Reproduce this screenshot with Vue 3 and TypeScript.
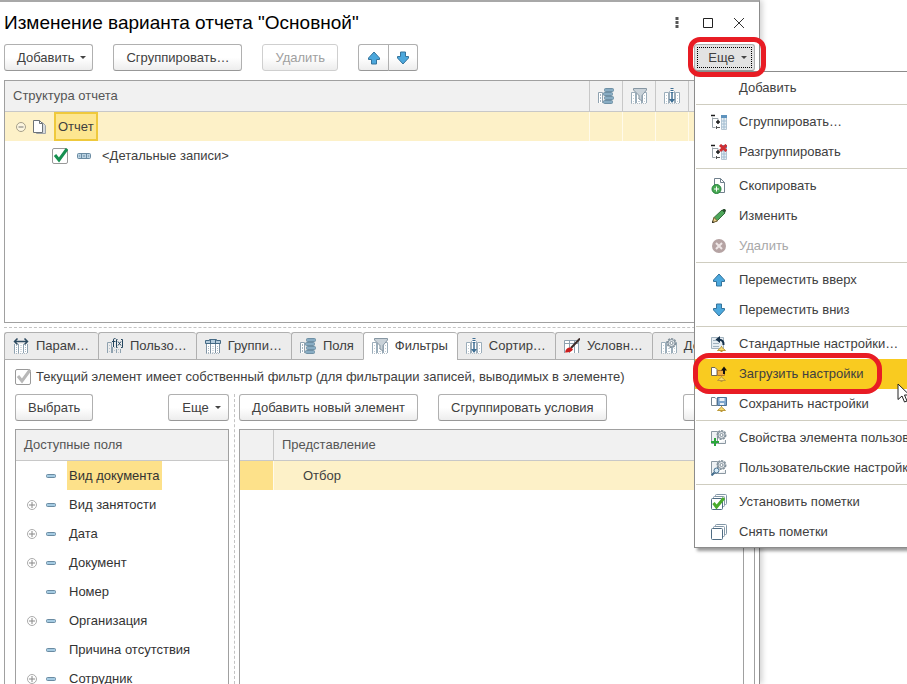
<script setup lang="ts">
import { ref } from 'vue'

interface MenuItem {
  label: string
  icon?: string
  disabled?: boolean
  active?: boolean
}

interface Field {
  name: string
  expandable: boolean
}

const menuGroups: MenuItem[][] = [
  [{ label: 'Добавить' }],
  [
    { label: 'Сгруппировать…', icon: 'group' },
    { label: 'Разгруппировать', icon: 'ungroup' },
  ],
  [
    { label: 'Скопировать', icon: 'copy' },
    { label: 'Изменить', icon: 'pencil' },
    { label: 'Удалить', icon: 'remove', disabled: true },
  ],
  [
    { label: 'Переместить вверх', icon: 'up' },
    { label: 'Переместить вниз', icon: 'down' },
  ],
  [
    { label: 'Стандартные настройки…', icon: 'standard' },
    { label: 'Загрузить настройки', icon: 'load', active: true },
    { label: 'Сохранить настройки', icon: 'save' },
  ],
  [
    { label: 'Свойства элемента пользовательских настроек', icon: 'props' },
    { label: 'Пользовательские настройки', icon: 'user' },
  ],
  [
    { label: 'Установить пометки', icon: 'check-all' },
    { label: 'Снять пометки', icon: 'uncheck-all' },
  ],
]

const tabs = [
  { label: 'Парам…', icon: 'params' },
  { label: 'Пользо…', icon: 'fx' },
  { label: 'Группи…', icon: 'grouping' },
  { label: 'Поля', icon: 'fields' },
  { label: 'Фильтры', icon: 'filter' },
  { label: 'Сортир…', icon: 'sort' },
  { label: 'Условн…', icon: 'brush' },
  { label: 'Допол…', icon: 'gear' },
]
const activeTab = ref('Фильтры')

const columnIcons = ['fields', 'filter', 'sort', 'brush', 'gear']

const fields: Field[] = [
  { name: 'Вид документа', expandable: false },
  { name: 'Вид занятости', expandable: true },
  { name: 'Дата', expandable: true },
  { name: 'Документ', expandable: true },
  { name: 'Номер', expandable: false },
  { name: 'Организация', expandable: true },
  { name: 'Причина отсутствия', expandable: false },
  { name: 'Сотрудник', expandable: true },
]
const selectedField = ref('Вид документа')
const detailsEnabled = ref(true)
</script>

<template>
  <svg class="sprite" aria-hidden="true">
    <symbol id="cols" viewBox="0 0 16 16">
      <path d="M.5 15V4.500h4V15M5.500 15V3.500h5V15M11.500 15V4.500h4V15" fill="#fff" stroke="#9badba" />
      <path d="M0 15.500h16" stroke="#b4c0c9" stroke-dasharray="1 1" />
      <path d="M2 7.500h1M2 10.500h1M2 13.500h1M7 7.500h2M7 10.500h2M7 13.500h2M13 7.500h1M13 10.500h1M13 13.500h1" stroke="#c3ced6" />
    </symbol>
    <symbol id="up" viewBox="0 0 16 16">
      <path d="M8 2 13.500 8v1.500H10.500V14h-5V9.500h-3V8z" fill="#4ca8dd" stroke="#35749c" />
    </symbol>
    <symbol id="down" viewBox="0 0 16 16">
      <path d="M8 14 13.500 8V6.500H10.500V2h-5v4.500h-3V8z" fill="#4ca8dd" stroke="#35749c" />
    </symbol>
    <symbol id="params" viewBox="0 0 16 16">
      <path d="M1.500 6v9M5.500 6v9M10.500 6v9M14.500 6v9" stroke="#8fa2b0" />
      <path d="M2 6h3v9H2zM6 6h4v9H6zM11 6h3v9h-3z" fill="#fff" />
      <path d="M3.500 7v8M8 7v8M12.500 7v8M1 15.500h14" stroke="#aab8c3" stroke-dasharray="1 1" />
      <path d="M1.500 3.500h13M4.500.5l-3 3 3 3M11.500.5l3 3-3 3" fill="none" stroke="#2d4a60" stroke-width="1.500" />
    </symbol>
    <symbol id="fx" viewBox="0 0 16 16">
      <path d="M.5 15V4.500h4V15M5.500 15V9M9.500 15v-4M13.500 15v-4" fill="none" stroke="#8fa2b0" />
      <path d="M2.500 7v8M7.500 9v6M11.500 11v4" stroke="#b9c5ce" stroke-dasharray="1 2" />
      <path d="M8.500.5H7.500Q6.500.5 6.500 2v7M5 3.500h3.500M10.500 1.500H9.500v8h1M14 1.500h1.500v8H14M11 3.500l3 4M14 3.500l-3 4" fill="none" stroke="#24465f" />
    </symbol>
    <symbol id="grouping" viewBox="0 0 16 16">
      <path d="M1.500 15V5h13v10M5.500 6v9M10.500 6v9" fill="#fff" stroke="#7f93a3" />
      <path d="M3.500 8v7M8 8v7M12.500 8v7M1 15.500h14" stroke="#a9b7c2" stroke-dasharray="1 1" />
      <path d="M.5 5.500v-3h4v-1h7v1h4v3z" fill="#b4cbdc" stroke="#456a85" />
      <path d="M5.500 2v4M10.500 2v4" stroke="#456a85" />
    </symbol>
    <symbol id="fields" viewBox="0 0 16 16">
      <path d="M.5 15V4.500h4V15" fill="#fff" stroke="#8fa2b0" />
      <path d="M2.500 6v9" stroke="#a5b5c1" stroke-dasharray="2 1" />
      <g fill="#88acc3" stroke="#6f90a5">
        <rect x="6.500" y=".5" width="9" height="3" rx="1" />
        <rect x="5.500" y="4.500" width="9" height="3" rx="1" />
        <rect x="6.500" y="8.500" width="9" height="3" rx="1" />
        <rect x="5.500" y="12.500" width="9" height="3" rx="1" />
      </g>
    </symbol>
    <symbol id="filter" viewBox="0 0 16 16">
      <use href="#cols" />
      <path d="M2.500.5h13V2L11 7.500V13l-3-2V7.500L2.500 2z" fill="#c9d2d9" stroke="#8797a3" />
    </symbol>
    <symbol id="sort" viewBox="0 0 16 16">
      <use href="#cols" />
      <path d="M6 3h4v12H6z" fill="#fff" />
      <path d="M8 5v9" stroke="#3f6f94" stroke-width="1.500" />
      <path d="M5 11h6l-3 4z" fill="#3f6f94" />
      <path d="M8 0v5" stroke="#3f6f94" stroke-width="3" stroke-dasharray="1 1" />
    </symbol>
    <symbol id="brush" viewBox="0 0 16 16">
      <path d="M.5 15V2.500h14V15M5.500 3v12M10.500 3v12M1 5.500h13" fill="#fff" stroke="#8fa2b0" />
      <path d="M16 .5 7 10" stroke="#3c2b28" stroke-width="2" />
      <path d="M7 9.500q-5-.5-6 5 6 .5 8-3z" fill="#c91e1e" />
    </symbol>
    <symbol id="gearwheel" viewBox="0 0 16 16">
      <circle cx="10.500" cy="5" r="4" fill="#dfe4e7" stroke="#82909a" stroke-width="2" stroke-dasharray="2 1" />
      <circle cx="10.500" cy="5" r="3.500" fill="#e3e7ea" stroke="#8795a0" />
      <circle cx="10.500" cy="5" r="1.500" fill="#fff" stroke="#82909a" />
    </symbol>
    <symbol id="gear" viewBox="0 0 16 16">
      <use href="#cols" />
      <use href="#gearwheel" />
    </symbol>
    <symbol id="group" viewBox="0 0 16 16">
      <path d="M10.500 1.500h5v14h-5z" fill="#e6eef4" stroke="#b4c6d3" />
      <path d="M10 1h6v3h-6z" fill="#5d92bd" />
      <path d="M10.500 7h5M10.500 10h5M10.500 13h5M13 4v11" stroke="#a2bdd1" />
      <path d="M0 1.500h4M5 8h4M7 6v4" stroke="#1c1c1c" stroke-width="1.500" />
      <path d="M1.500 3.500v10h3M2 4.500h5V6" fill="none" stroke="#9aa4ab" />
      <path d="M5 13.500h4M5.500 12v3" stroke="#555" />
    </symbol>
    <symbol id="ungroup" viewBox="0 0 16 16">
      <use href="#group" />
      <path d="M9 1l6.500 6M15.500 1 9 7" stroke="#cf3034" stroke-width="3" />
    </symbol>
    <symbol id="copy" viewBox="0 0 16 16">
      <path d="M3.500.5h6l4 4v10h-10z" fill="#fff" stroke="#71818d" />
      <path d="M9.500.5v4h4" fill="none" stroke="#71818d" />
      <circle cx="5.500" cy="11" r="4.500" fill="#4aaa54" stroke="#23803a" />
      <path d="M5.500 8.500v5M3 11h5" stroke="#fff" />
    </symbol>
    <symbol id="pencil" viewBox="0 0 16 16">
      <path d="m1.500 14.500 1.500-5L11 2l3 3-8 8z" fill="#4ea65a" stroke="#356f3d" />
      <path d="m11 2 1.500-1H14l1 1.500L14 5z" fill="#274d2c" />
      <path d="m1.500 14.500 1.500-5 3.500 3.500z" fill="#e9cf91" stroke="#7b6335" />
      <path d="m1 15 .5-2 1.500 1.500z" fill="#222" />
    </symbol>
    <symbol id="remove" viewBox="0 0 16 16">
      <circle cx="8" cy="8" r="7" fill="#b5a3a3" />
      <path d="m5 5 6 6M11 5l-6 6" stroke="#eee6e6" stroke-width="2" />
    </symbol>
    <symbol id="bell" viewBox="0 0 16 16">
      <path d="m10.500 10 4 3.500h-8z" fill="#f7da70" stroke="#bd9a3a" />
      <path d="M10 9.500h1M9.500 14.500h2" stroke="#bd9a3a" />
    </symbol>
    <symbol id="standard" viewBox="0 0 16 16">
      <path d="M.5 1.500h12v11H.5z" fill="#e6edf2" stroke="#a3b3bf" />
      <path d="M2 4.500h4M2 7.500h6M2 10.500h6" stroke="#9fb1bf" />
      <path d="M12.500 9Q13 4 8 3.500" fill="none" stroke="#16324c" stroke-width="2" />
      <path d="M9 0v7L4.500 3.500z" fill="#16324c" />
      <use href="#bell" y="1" />
    </symbol>
    <symbol id="load" viewBox="0 0 16 16">
      <path d="M.5 1.500H4l2 2v6H.5z" fill="#fff" stroke="#6e6a58" />
      <path d="M6.500 4.500h7v5h-7z" fill="#f3ae3d" stroke="#b3772a" />
      <path d="M13 8V3" stroke="#111" stroke-width="2" />
      <path d="M10 4.500h6L13 .5z" fill="#111" />
      <use href="#bell" y="1" />
    </symbol>
    <symbol id="save" viewBox="0 0 16 16">
      <path d="M.5 1.500H4l2 2v6H.5z" fill="#fff" stroke="#73828e" />
      <path d="M6.500 1.500h9v8h-9z" fill="#7ea6cd" stroke="#4c7196" />
      <path d="M8.500 2h5v3h-5zM9 7h4v2H9z" fill="#e8f0f7" />
      <use href="#bell" y="1" />
    </symbol>
    <symbol id="props" viewBox="0 0 16 16">
      <path d="M.5 1.500h6v12h-6zM7 13.500h7.500V10" fill="#eef1f3" stroke="#8b98a2" />
      <use href="#gearwheel" />
      <path d="M4 8v8M0 12h8" stroke="#2ba63a" stroke-width="2" />
    </symbol>
    <symbol id="user" viewBox="0 0 16 16">
      <path d="M.5 1.500h6v12h-6zM7 13.500h7.500V10" fill="#eef1f3" stroke="#8b98a2" />
      <use href="#gearwheel" />
      <circle cx="5.500" cy="10.500" r="2.500" fill="#d7ebf7" stroke="#456f8f" />
      <path d="M3.500 12.500.5 15.500" stroke="#456f8f" stroke-width="2" />
    </symbol>
    <symbol id="uncheck-all" viewBox="0 0 16 16">
      <rect x="4.500" y=".5" width="11" height="10" rx="1" fill="#fff" stroke="#8297a7" />
      <rect x="2.500" y="2.500" width="11" height="10" rx="1" fill="#fff" stroke="#8297a7" />
      <rect x=".5" y="4.500" width="11" height="11" rx="1" fill="#fff" stroke="#4f6c83" />
    </symbol>
    <symbol id="check-all" viewBox="0 0 16 16">
      <use href="#uncheck-all" />
      <path d="m2.500 9 3 4L13 4" fill="none" stroke="#49ab2c" stroke-width="3" />
    </symbol>
    <symbol id="tick" viewBox="0 0 16 16">
      <path d="m3 7 4 5L15 1" fill="none" stroke="currentColor" stroke-width="3" />
    </symbol>
    <symbol id="dash" viewBox="0 0 16 16">
      <rect x="3.500" y="6.500" width="9" height="3" rx="1" fill="#a5cbe2" stroke="#6a8ba2" />
    </symbol>
    <symbol id="plus" viewBox="0 0 10 10">
      <circle cx="5" cy="5" r="4.500" fill="#fff" stroke="#aaa" />
      <path d="M2 5h6M5 2v6" stroke="#888" />
    </symbol>
    <symbol id="minus" viewBox="0 0 10 10">
      <circle cx="5" cy="5" r="4.500" fill="#fdf6df" stroke="#a69f89" />
      <path d="M2.500 5h5" stroke="#777" />
    </symbol>
    <symbol id="pages" viewBox="0 0 16 16">
      <path d="M4.500 3.500h6l3 3v8h-9z" fill="#d6dade" stroke="#a0a5a9" />
      <path d="M1.500 1.500h6l3 3v9h-9z" fill="#fff" stroke="#6d7378" />
      <path d="M7.500 1.500v3h3" fill="none" stroke="#6d7378" />
    </symbol>
    <symbol id="records" viewBox="0 0 16 16">
      <rect x="1.500" y="5.500" width="13" height="5" rx="1" fill="#b9d1e1" stroke="#6a8ba2" />
      <path d="M5.500 6v4M10.500 6v4M3 8h1M7 8h2M12 8h1" stroke="#6a8ba2" />
    </symbol>
  </svg>

  <main class="screen">
    <section class="window">
      <header class="titlebar">
        <h1>Изменение варианта отчета "Основной"</h1>
        <div class="controls">
          <button type="button" aria-label="Меню окна">
            <svg viewBox="0 0 12 12"><path d="M4.500 0h3v3h-3zM4.500 4h3v3h-3zM4.500 8h3v3h-3z" fill="#555" /></svg>
          </button>
          <button type="button" aria-label="Развернуть">
            <svg viewBox="0 0 12 12"><path d="M1.500 1.500h9v9h-9z" fill="none" stroke="#222" /></svg>
          </button>
          <button type="button" aria-label="Закрыть">
            <svg viewBox="0 0 12 12"><path d="m1 1 10 10M11 1 1 11" fill="none" stroke="#333" /></svg>
          </button>
        </div>
      </header>

      <div class="toolbar">
        <button type="button" class="btn drop">Добавить<i class="caret"></i></button>
        <button type="button" class="btn">Сгруппировать…</button>
        <button type="button" class="btn" disabled>Удалить</button>
        <div class="pair">
          <button type="button" class="btn" aria-label="Вверх"><svg class="icon"><use href="#up" /></svg></button>
          <button type="button" class="btn" aria-label="Вниз"><svg class="icon"><use href="#down" /></svg></button>
        </div>
        <div class="more">
          <button type="button" class="btn drop pressed" aria-haspopup="menu" aria-expanded="true">
            Еще<i class="caret"></i>
          </button>
          <ul class="menu" role="menu">
            <template v-for="(group, g) in menuGroups" :key="g">
              <li v-if="g > 0" class="separator" role="separator"></li>
              <li v-for="item in group" :key="item.label" role="none">
                <button
                  type="button"
                  role="menuitem"
                  class="menu-item"
                  :class="{ active: item.active }"
                  :disabled="item.disabled"
                >
                  <svg class="icon"><use v-if="item.icon" :href="'#' + item.icon" /></svg>
                  <span>{{ item.label }}</span>
                </button>
                <template v-if="item.active">
                  <span class="mark mark-item"></span>
                  <svg class="cursor" viewBox="0 0 14 20">
                    <path d="M1 1v15.500l4-3.500 2.500 6 2.500-1-2.500-6h5z" fill="#fff" stroke="#222" />
                  </svg>
                </template>
              </li>
            </template>
          </ul>
          <span class="mark mark-button"></span>
        </div>
      </div>

      <div class="structure frame">
        <table>
          <thead>
            <tr>
              <th scope="col">Структура отчета</th>
              <th v-for="icon in columnIcons" :key="icon" class="slot">
                <svg class="icon"><use :href="'#' + icon" /></svg>
              </th>
            </tr>
          </thead>
          <tbody>
            <tr class="selected">
              <td>
                <div class="node root">
                  <svg class="knob"><use href="#minus" /></svg>
                  <svg class="icon"><use href="#pages" /></svg>
                  <span class="focus">Отчет</span>
                </div>
              </td>
              <td v-for="icon in columnIcons" :key="icon"></td>
            </tr>
            <tr>
              <td>
                <label class="node child">
                  <span class="check">
                    <input v-model="detailsEnabled" type="checkbox" />
                    <svg v-if="detailsEnabled" class="icon"><use href="#tick" /></svg>
                  </span>
                  <svg class="icon"><use href="#records" /></svg>
                  <span>&lt;Детальные записи&gt;</span>
                </label>
              </td>
              <td v-for="icon in columnIcons" :key="icon"></td>
            </tr>
          </tbody>
        </table>
      </div>

      <div class="splitter"></div>

      <nav class="tabs" role="tablist">
        <button
          v-for="tab in tabs"
          :key="tab.label"
          type="button"
          role="tab"
          class="tab"
          :class="{ current: tab.label === activeTab }"
          :aria-selected="tab.label === activeTab"
          @click="activeTab = tab.label"
        >
          <svg class="icon"><use :href="'#' + tab.icon" /></svg>{{ tab.label }}
        </button>
      </nav>

      <div class="panel">
        <label class="own-filter">
          <span class="check">
            <input type="checkbox" checked disabled />
            <svg class="icon"><use href="#tick" /></svg>
          </span>
          Текущий элемент имеет собственный фильтр (для фильтрации записей, выводимых в элементе)
        </label>

        <div class="split">
          <div class="pane available">
            <div class="bar">
              <button type="button" class="btn">Выбрать</button>
              <button type="button" class="btn drop end">Еще<i class="caret"></i></button>
            </div>
            <div class="frame">
              <table>
                <thead>
                  <tr><th scope="col">Доступные поля</th></tr>
                </thead>
                <tbody>
                  <tr v-for="field in fields" :key="field.name" @click="selectedField = field.name">
                    <td>
                      <div class="node field">
                        <svg class="knob"><use v-if="field.expandable" href="#plus" /></svg>
                        <svg class="icon"><use href="#dash" /></svg>
                        <span :class="{ picked: field.name === selectedField }">{{ field.name }}</span>
                      </div>
                    </td>
                  </tr>
                </tbody>
              </table>
            </div>
          </div>
          <div class="divider"></div>
          <div class="pane conditions">
            <div class="bar">
              <button type="button" class="btn">Добавить новый элемент</button>
              <button type="button" class="btn">Сгруппировать условия</button>
              <button type="button" class="btn drop end">Еще<i class="caret"></i></button>
            </div>
            <div class="frame">
              <table>
                <thead>
                  <tr><th class="slot"></th><th scope="col">Представление</th></tr>
                </thead>
                <tbody>
                  <tr class="selected">
                    <td class="strong"></td>
                    <td class="filter-root">Отбор</td>
                  </tr>
                </tbody>
              </table>
            </div>
          </div>
        </div>
      </div>
    </section>
  </main>
</template>

<style>
body {
  overflow: hidden;
  background: #fff;
}
</style>

<style scoped>
* {
  box-sizing: border-box;
}
.sprite {
  position: absolute;
  width: 0;
  height: 0;
}
.screen {
  height: 100vh;
  padding-right: 147px;
  overflow: hidden;
  font: 13px/16px "Liberation Sans", Arial, sans-serif;
  color: #404040;
}
button {
  font: inherit;
  color: inherit;
}
.window {
  display: flex;
  flex-direction: column;
  height: 100%;
  padding: 0 4px;
  border-top: 2px solid #a8a8a8;
  border-right: 1px solid #8c8c8c;
  box-shadow: 2px 0 6px #0003;
}
.icon {
  display: block;
  flex: none;
  width: 16px;
  height: 16px;
}
.titlebar {
  display: flex;
  flex: none;
  align-items: center;
  justify-content: space-between;
  height: 42px;
}
h1 {
  margin: 0;
  font-size: 19px;
  font-weight: 400;
  line-height: 24px;
  color: #000;
}
.controls {
  display: flex;
  gap: 7px;
  padding-right: 4px;
}
.controls button {
  display: grid;
  place-items: center;
  width: 24px;
  height: 24px;
  padding: 0;
  border: 0;
  background: none;
}
.controls svg {
  width: 12px;
  height: 12px;
}
.toolbar {
  display: flex;
  flex: none;
  gap: 20px;
  align-items: flex-start;
  height: 36px;
}
.btn {
  display: flex;
  align-items: center;
  justify-content: center;
  height: 27px;
  padding: 0 12px;
  white-space: nowrap;
  background: linear-gradient(#fff 50%, #ededed);
  border: 1px solid #b0b0b0;
  border-bottom-color: #989898;
  border-radius: 3px;
}
.btn:disabled {
  color: #a0a0a0;
  border-color: #cfcfcf;
}
.drop {
  gap: 6px;
  padding: 0 6px 0 12px;
}
.caret {
  border: 3px solid transparent;
  border-top-color: #444;
  border-bottom: 0;
}
.pair {
  display: flex;
}
.pair .btn {
  width: 30px;
  padding: 0;
}
.pair .btn:first-child {
  width: 31px;
  border-radius: 3px 0 0 3px;
}
.pair .btn:last-child {
  margin-left: -1px;
  border-radius: 0 3px 3px 0;
}
.more {
  position: relative;
  margin-left: auto;
}
.pressed {
  width: 61px;
  background: #e2e2e2;
  outline: 1px dotted #000;
  outline-offset: -4px;
}
.mark {
  position: absolute;
  border: 5px solid #e81c24;
  border-radius: 12px;
  pointer-events: none;
}
.mark-button {
  z-index: 3;
  top: -7px;
  right: -11px;
  bottom: -6px;
  left: -6px;
}
.mark-item {
  z-index: 3;
  top: -6px;
  bottom: -5px;
  left: -2px;
  width: 189px;
  border-radius: 16px;
}
.menu {
  position: absolute;
  z-index: 2;
  top: 27px;
  left: 0;
  width: 340px;
  margin: 0;
  padding: 1px 0 0;
  list-style: none;
  background: #fff;
  border: 1px solid #8c8c8c;
  box-shadow: 3px 3px 3px #0006;
}
.menu li {
  position: relative;
}
.separator {
  height: 4px;
  padding: 1px;
}
.separator::before {
  display: block;
  height: 1px;
  content: "";
  background: #cfcdc0;
}
.menu-item {
  display: flex;
  gap: 12px;
  align-items: center;
  width: 100%;
  height: 30px;
  padding: 0 16px;
  white-space: nowrap;
  background: none;
  border: 0;
}
.menu-item:disabled {
  color: #a8a8a8;
}
.menu-item.active {
  background: #f9cb20;
}
.cursor {
  position: absolute;
  z-index: 4;
  top: 24px;
  left: 202px;
  width: 14px;
  height: 20px;
}
.frame {
  overflow: hidden;
  border: 1px solid #a0a0a0;
}
.structure {
  flex: none;
  height: 243px;
}
table {
  width: 100%;
  table-layout: fixed;
  border-spacing: 0;
}
th {
  height: 31px;
  padding: 0 8px;
  font-weight: 400;
  text-align: left;
  color: #555;
  background: #f1f1f1;
  border-bottom: 1px solid #c8c8c8;
}
th + th {
  border-left: 1px solid #c8c8c8;
}
.slot {
  width: 33px;
}
td {
  height: 29px;
  padding: 0;
}
.selected td {
  background: #fdf1c8;
}
.selected td + td {
  border-left: 1px solid #fffaea;
}
.selected .strong {
  background: #fde18a;
}
.filter-root {
  padding-left: 29px;
}
.node {
  display: flex;
  align-items: center;
  height: 29px;
}
.knob {
  flex: none;
  width: 10px;
  height: 10px;
}
.root {
  gap: 6px;
  padding-left: 11px;
}
.focus {
  height: 29px;
  padding: 0 2px;
  line-height: 25px;
  background: #fde690;
  border: 2px solid #efc93c;
}
.child {
  gap: 8px;
  padding-left: 47px;
}
.child > span:last-child {
  padding-left: 2px;
}
.check {
  display: grid;
  color: #159050;
}
.check > * {
  grid-area: 1 / 1;
}
.check .icon {
  pointer-events: none;
}
.check input {
  width: 16px;
  height: 16px;
  margin: 0;
  appearance: none;
  background: #fff;
  border: 1px solid #999;
  border-radius: 2px;
}
.own-filter .check {
  color: #b8b8b8;
}
.splitter {
  flex: none;
  height: 9px;
  padding-top: 4px;
}
.splitter::before {
  display: block;
  content: "";
  border-top: 1px dashed #c4c4c4;
}
.tabs {
  display: flex;
  flex: none;
  overflow: hidden;
}
.tab {
  display: flex;
  flex: none;
  gap: 7px;
  align-items: center;
  height: 28px;
  padding: 0 9px 0 8px;
  white-space: nowrap;
  background: #ececec;
  border: 1px solid #b0b0b0;
  border-right-width: 0;
  border-radius: 3px 3px 0 0;
}
.tab:last-child {
  flex: 1 1 0;
  border-right-width: 1px;
}
.tab.current {
  background: #fff;
  border-bottom-color: #fff;
}
.panel {
  display: flex;
  flex: 1 1 0;
  flex-direction: column;
  min-height: 0;
  padding: 8px 10px 0;
  overflow: hidden;
  border: solid #a0a0a0;
  border-width: 0 1px;
}
.own-filter {
  display: flex;
  flex: none;
  gap: 5px;
  align-items: center;
  height: 18px;
  white-space: nowrap;
}
.split {
  display: grid;
  flex: 1 1 0;
  grid-template-columns: 214px 10px minmax(0, 1fr);
  min-height: 0;
  padding-top: 8px;
}
.pane {
  display: flex;
  flex-direction: column;
  min-height: 0;
}
.pane .frame {
  flex: 1 1 0;
  min-height: 0;
  border-bottom: 0;
}
.bar {
  display: flex;
  flex: none;
  gap: 20px;
  height: 35px;
}
.end {
  width: 61px;
  margin-left: auto;
}
.divider {
  justify-self: center;
  border-left: 1px dashed #c4c4c4;
}
.field {
  gap: 6px;
  padding-left: 11px;
}
.field .icon {
  margin-right: 2px;
}
.field span {
  padding: 0 2px;
  line-height: 29px;
  color: #333;
}
.field .picked {
  background: #fde18a;
}
</style>
